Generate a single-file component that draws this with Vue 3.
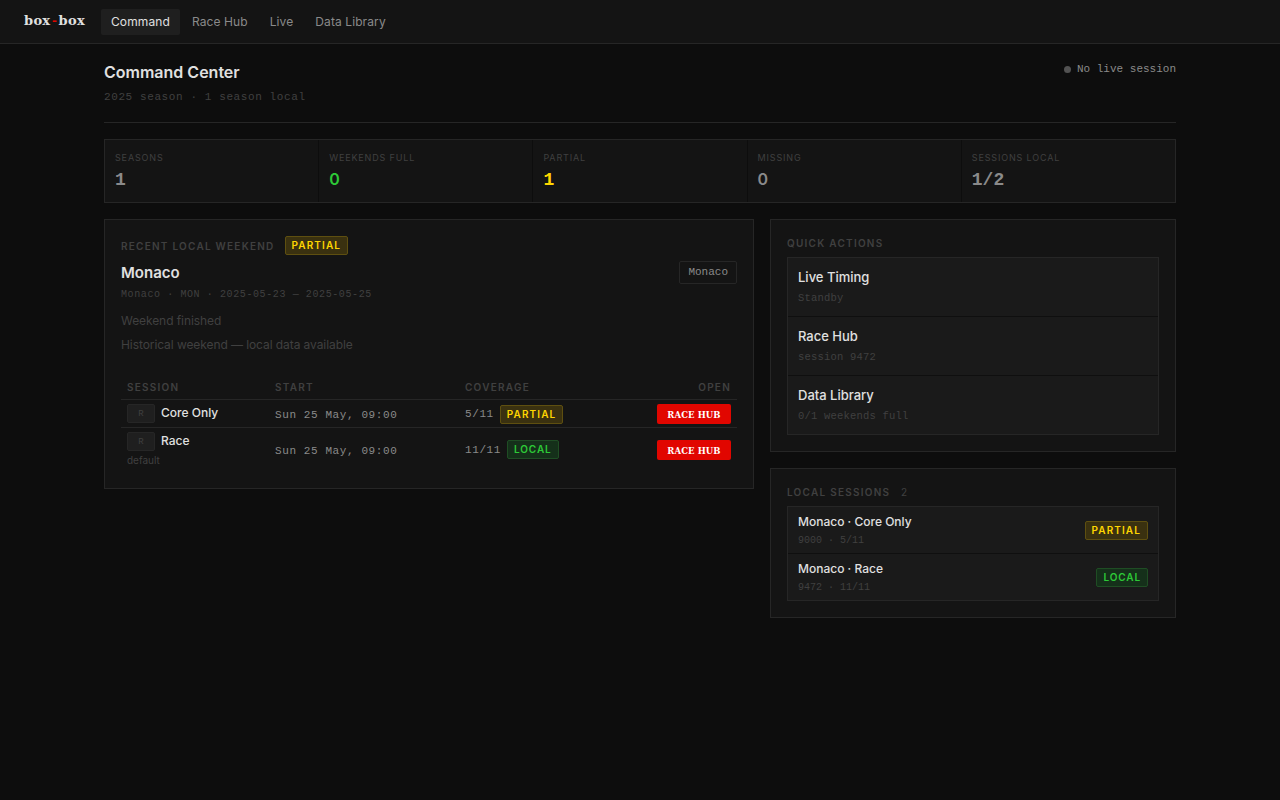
<template>
  <div class="app">
    <header class="nav">
      <span class="logo">box<span class="logo-dash">-</span>box</span>
      <nav class="nav-links">
        <a v-for="(l, i) in links" :key="l" class="nav-link" :class="{ active: i === 0 }">{{ l }}</a>
      </nav>
    </header>

    <main class="page">
      <div class="page-head">
        <div>
          <h1 class="page-title">Command Center</h1>
          <div class="page-sub">2025 season · 1 season local</div>
        </div>
        <div class="live-state"><span class="live-dot"></span>No live session</div>
      </div>

      <div class="stats">
        <div v-for="s in stats" :key="s.label" class="stat">
          <div class="stat-label">{{ s.label }}</div>
          <div class="stat-value" :class="[s.tone, { zero: s.value === '0' }]">{{ s.value }}</div>
        </div>
      </div>

      <div class="columns">
        <section class="panel recent">
          <div class="recent-head">
            <span class="section-label">Recent local weekend</span>
            <span class="badge partial">PARTIAL</span>
          </div>
          <div class="weekend-row">
            <div>
              <h2 class="weekend-name">Monaco</h2>
              <div class="weekend-meta">Monaco · MON · 2025-05-23 — 2025-05-25</div>
            </div>
            <span class="circuit-tag">Monaco</span>
          </div>
          <p class="note first">Weekend finished</p>
          <p class="note">Historical weekend — local data available</p>

          <table class="sessions">
            <thead>
              <tr>
                <th class="col-session">Session</th>
                <th class="col-start">Start</th>
                <th>Coverage</th>
                <th class="right">Open</th>
              </tr>
            </thead>
            <tbody>
              <tr v-for="r in rows" :key="r.name">
                <td class="name-cell">
                  <div class="session-cell">
                    <span class="chip">R</span>
                    <span class="session-name">{{ r.name }}</span>
                  </div>
                  <div v-if="r.sub" class="session-sub">{{ r.sub }}</div>
                </td>
                <td class="start">Sun 25 May, 09:00</td>
                <td>
                  <div class="coverage">
                    <span class="cov-num">{{ r.cov }}</span>
                    <span class="badge" :class="r.badge">{{ r.badge.toUpperCase() }}</span>
                  </div>
                </td>
                <td class="right"><button class="open-btn">RACE HUB</button></td>
              </tr>
            </tbody>
          </table>
        </section>

        <div class="side">
          <section class="panel">
            <div class="section-label side-label">Quick actions</div>
            <div class="list">
              <div v-for="a in actions" :key="a.title" class="action">
                <div class="action-title">{{ a.title }}</div>
                <div class="action-sub">{{ a.sub }}</div>
              </div>
            </div>
          </section>

          <section class="panel">
            <div class="section-label side-label">Local sessions <span class="count">2</span></div>
            <div class="list">
              <div v-for="l in locals" :key="l.title" class="local-row">
                <div>
                  <div class="local-title">{{ l.title }}</div>
                  <div class="local-sub">{{ l.sub }}</div>
                </div>
                <span class="badge" :class="l.badge">{{ l.badge.toUpperCase() }}</span>
              </div>
            </div>
          </section>
        </div>
      </div>
    </main>
  </div>
</template>

<script setup>
const links = ['Command', 'Race Hub', 'Live', 'Data Library'];

const stats = [
  { label: 'SEASONS', value: '1', tone: '' },
  { label: 'WEEKENDS FULL', value: '0', tone: 'green' },
  { label: 'PARTIAL', value: '1', tone: 'yellow' },
  { label: 'MISSING', value: '0', tone: '' },
  { label: 'SESSIONS LOCAL', value: '1/2', tone: '' },
];

const rows = [
  { name: 'Core Only', sub: '', cov: '5/11', badge: 'partial' },
  { name: 'Race', sub: 'default', cov: '11/11', badge: 'local' },
];

const actions = [
  { title: 'Live Timing', sub: 'Standby' },
  { title: 'Race Hub', sub: 'session 9472' },
  { title: 'Data Library', sub: '0/1 weekends full' },
];

const locals = [
  { title: 'Monaco · Core Only', sub: '9000 · 5/11', badge: 'partial' },
  { title: 'Monaco · Race', sub: '9472 · 11/11', badge: 'local' },
];
</script>

<style>
html, body {
  background: #0d0d0d;
}
</style>

<style scoped>
.app {
  min-height: 800px;
  background: #0d0d0d;
  color: #e0e0e0;
  font-family: Inter, "Liberation Sans", sans-serif;
}

.nav {
  display: flex;
  align-items: center;
  height: 43px;
  padding: 0 24px;
  background: #141414;
  border-bottom: 1px solid #262626;
}

.logo {
  width: 77px;
  font-family: "DejaVu Serif", serif;
  font-size: 13px;
  font-weight: 700;
  letter-spacing: 0.3px;
  color: #e0e0e0;
  position: relative;
  top: -1px;
}

.logo-dash {
  font-family: "Liberation Mono", monospace;
  color: #e10600;
}

.nav-links {
  display: flex;
  gap: 2px;
}

.nav-link {
  padding: 0 10px;
  height: 26px;
  line-height: 26px;
  font-size: 12px;
  letter-spacing: 0.1px;
  color: #8a8a8a;
  border-radius: 2px;
}

.nav-link.active {
  background: #1f1f1f;
  color: #e0e0e0;
}

.page {
  width: 1072px;
  margin: 0 auto;
  padding-top: 19px;
}

.page-head {
  display: flex;
  justify-content: space-between;
  align-items: flex-start;
  height: 59px;
  border-bottom: 1px solid #262626;
}

.page-title {
  margin: 0;
  font-size: 16px;
  line-height: 18px;
  font-weight: 600;
  color: #e0e0e0;
}

.page-sub {
  margin-top: 8px;
  font-family: "Liberation Mono", monospace;
  font-size: 11px;
  line-height: 16px;
  letter-spacing: 0.6px;
  color: #404040;
}

.live-state {
  display: flex;
  align-items: center;
  gap: 6px;
  margin-top: 1px;
  font-family: "Liberation Mono", monospace;
  font-size: 11px;
  line-height: 11px;
  color: #8a8a8a;
}

.live-dot {
  width: 7px;
  height: 7px;
  border-radius: 50%;
  background: #525252;
}

.stats {
  display: grid;
  grid-template-columns: repeat(5, 1fr);
  gap: 1px;
  margin-top: 16px;
  height: 64px;
  box-sizing: border-box;
  background: #0d0d0d;
  border: 1px solid #262626;
}

.stat {
  background: #141414;
  padding: 12px 10px 0;
}

.stat-label {
  font-size: 9px;
  line-height: 11px;
  letter-spacing: 0.85px;
  color: #404040;
}

.stat-value {
  margin-top: 8px;
  font-family: "Liberation Mono", monospace;
  font-size: 18px;
  line-height: 18px;
  font-weight: 700;
  color: #8a8a8a;
}

.stat-value.zero {
  margin-top: 7px;
  font-family: Inter, sans-serif;
  font-size: 16px;
  font-weight: 600;
}

.stat-value.green {
  color: #2dc937;
}

.stat-value.yellow {
  color: #ffd600;
}

.columns {
  display: grid;
  grid-template-columns: 650px 406px;
  gap: 16px;
  align-items: start;
  margin-top: 16px;
}

.panel {
  box-sizing: border-box;
  padding: 16px;
  background: #141414;
  border: 1px solid #262626;
}

.side {
  display: flex;
  flex-direction: column;
  gap: 16px;
}

.recent {
  height: 270px;
}

.recent-head {
  display: flex;
  align-items: center;
  gap: 10px;
}

.section-label {
  font-size: 10px;
  font-weight: 600;
  letter-spacing: 1.25px;
  text-transform: uppercase;
  color: #404040;
}

.badge {
  display: inline-block;
  box-sizing: border-box;
  height: 19px;
  padding: 0 6px;
  font-size: 10px;
  line-height: 17px;
  font-weight: 600;
  letter-spacing: 1.1px;
  border: 1px solid;
  border-radius: 2px;
}

.badge.partial {
  color: #ffd600;
  background: #3a3110;
  border-color: #5e4f10;
}

.badge.local {
  letter-spacing: 0.9px;
  color: #2dc937;
  background: #15301a;
  border-color: #1f4d24;
}

.weekend-row {
  display: flex;
  justify-content: space-between;
  align-items: flex-start;
  margin-top: 6px;
}

.weekend-name {
  margin: 0;
  font-size: 15px;
  line-height: 24px;
  font-weight: 600;
  color: #e0e0e0;
}

.weekend-meta {
  margin-top: 3px;
  font-family: "Liberation Mono", monospace;
  font-size: 10px;
  line-height: 14px;
  letter-spacing: 0.6px;
  color: #404040;
}

.circuit-tag {
  padding: 0 8px;
  height: 23px;
  line-height: 21px;
  box-sizing: border-box;
  font-family: "Liberation Mono", monospace;
  font-size: 11px;
  color: #8a8a8a;
  background: #141414;
  border: 1px solid #262626;
  border-radius: 2px;
}

.note {
  margin: 6px 0 0;
  font-size: 12px;
  line-height: 18px;
  letter-spacing: -0.08px;
  color: #404040;
}

.note.first {
  margin-top: 10px;
}

.sessions {
  width: 100%;
  margin-top: 27px;
  border-collapse: collapse;
}

.sessions th {
  padding: 0 6px 6px;
  line-height: 12px;
  text-align: left;
  font-size: 10px;
  font-weight: 600;
  letter-spacing: 1.25px;
  text-transform: uppercase;
  color: #404040;
  border-bottom: 1px solid #262626;
}

.sessions td {
  padding: 4px 6px 3px;
  vertical-align: middle;
  border-bottom: 1px solid #262626;
}

.sessions td.name-cell {
  vertical-align: top;
}

.sessions td.start {
  padding-top: 6px;
}

.sessions tr:last-child td {
  border-bottom: none;
}

.sessions .right {
  text-align: right;
}

.col-session {
  width: 136px;
}

.col-start {
  width: 178px;
}

.session-cell {
  display: flex;
  align-items: flex-start;
  gap: 6px;
}

.chip {
  display: inline-flex;
  align-items: center;
  justify-content: center;
  box-sizing: border-box;
  width: 28px;
  height: 19px;
  font-family: "Liberation Mono", monospace;
  font-size: 9px;
  color: #404040;
  background: #1f1f1f;
  border: 1px solid #262626;
  border-radius: 2px;
}

.session-name {
  font-size: 12px;
  line-height: 17px;
  font-weight: 500;
  color: #e0e0e0;
}

.session-sub {
  margin-top: 3px;
  font-size: 10px;
  line-height: 13px;
  color: #404040;
}

.start {
  font-family: "Liberation Mono", monospace;
  font-size: 11px;
  letter-spacing: 0.6px;
  color: #8a8a8a;
}

.coverage {
  display: flex;
  align-items: center;
  gap: 6px;
}

.cov-num {
  font-family: "Liberation Mono", monospace;
  font-size: 11px;
  letter-spacing: 0.6px;
  color: #8a8a8a;
}

.open-btn {
  display: block;
  margin-left: auto;
  width: 74px;
  height: 20px;
  padding: 2px 0 0;
  font-family: "DejaVu Serif", serif;
  font-size: 8.5px;
  font-weight: 700;
  letter-spacing: 0.1px;
  color: #fff;
  background: #e10600;
  border: none;
  border-radius: 2px;
}

.side-label {
  line-height: 11px;
  margin-bottom: 8px;
  margin-top: 2px;
}

.count {
  margin-left: 7px;
  font-weight: 400;
  letter-spacing: 0;
}

.list {
  display: flex;
  flex-direction: column;
  gap: 1px;
  background: #0f0f0f;
  border: 1px solid #262626;
}

.action {
  box-sizing: border-box;
  height: 58px;
  padding: 10px 10px 0;
  background: #1a1a1a;
}

.action-title {
  font-size: 13px;
  line-height: 18px;
  font-weight: 500;
  color: #e0e0e0;
}

.action-sub {
  margin-top: 5px;
  font-family: "Liberation Mono", monospace;
  font-size: 10.5px;
  line-height: 15px;
  letter-spacing: 0.2px;
  color: #404040;
}

.local-row {
  display: flex;
  align-items: center;
  justify-content: space-between;
  box-sizing: border-box;
  height: 46px;
  padding: 0 10px;
  background: #1a1a1a;
}

.local-title {
  font-size: 12px;
  line-height: 16px;
  font-weight: 500;
  color: #e0e0e0;
}

.local-sub {
  margin-top: 5px;
  font-family: "Liberation Mono", monospace;
  font-size: 10px;
  line-height: 12px;
  color: #404040;
}
</style>
